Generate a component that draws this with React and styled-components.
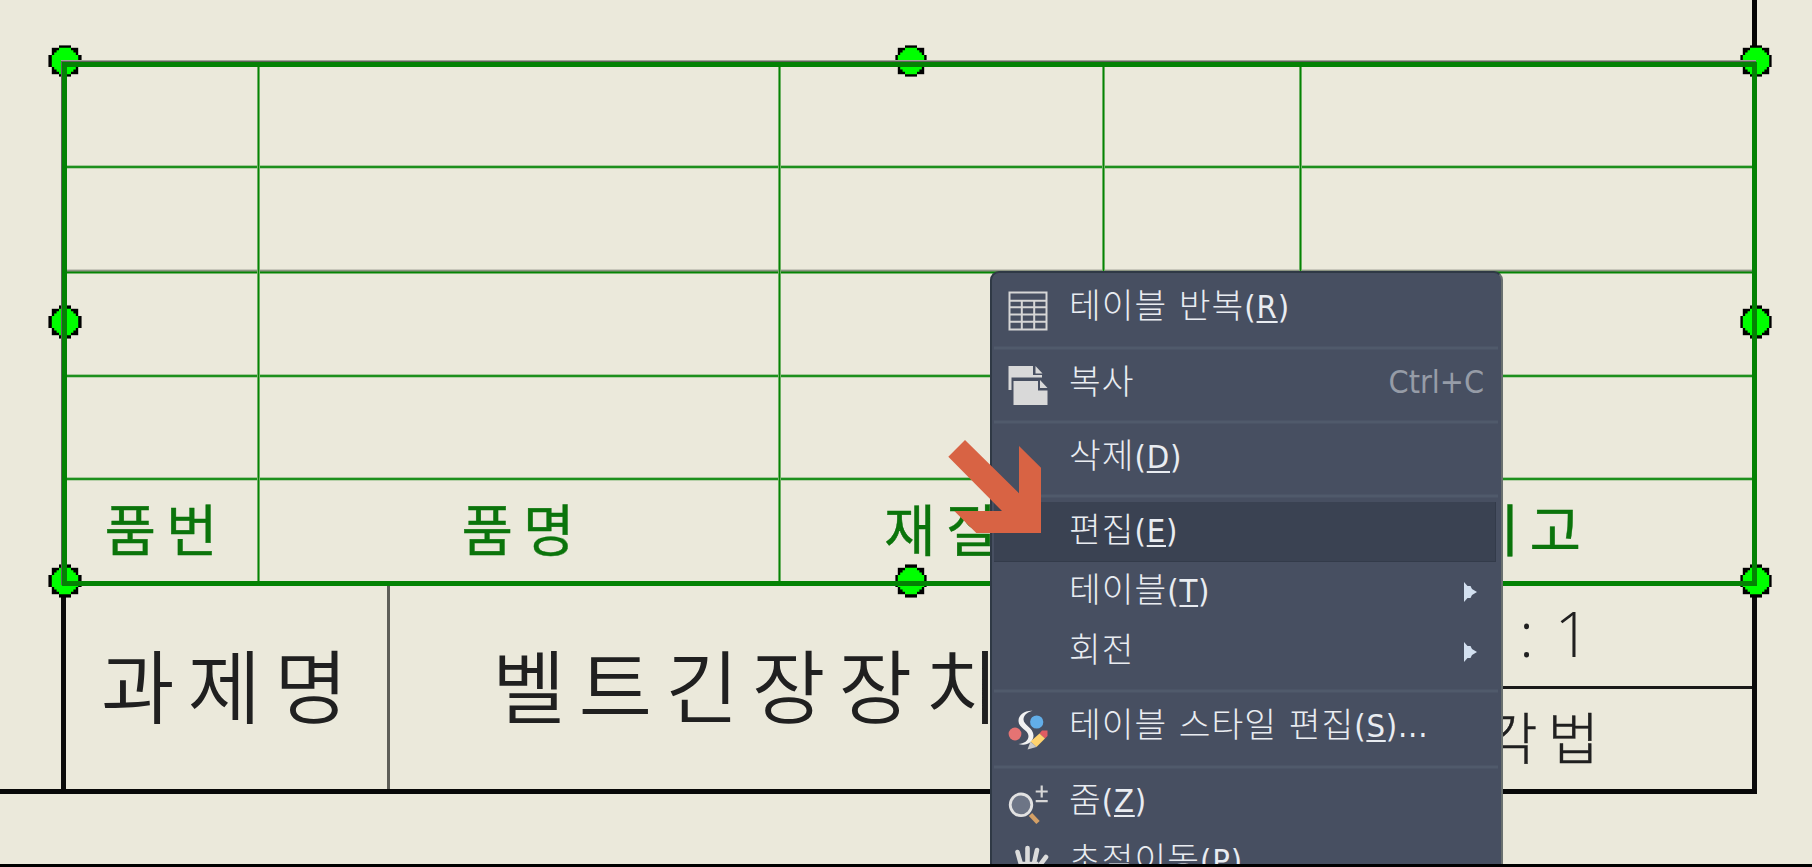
import React from 'react'
import styled, { createGlobalStyle } from 'styled-components'

const columns = [193, 521, 324, 197, 450]
const rows = [102, 105, 104, 103, 100]
const headings = ['품번', '품명', '재질', '', '비고']

const handles = [
  { x: 65.2, y: 61, tx: 1.4, ty: 1 },
  { x: 911, y: 61, tx: 1, ty: 1 },
  { x: 1756, y: 61, tx: 1, ty: 1 },
  { x: 65.2, y: 321.5, tx: 1.4, ty: 1.4 },
  { x: 1756, y: 321.5, tx: 1, ty: 1.4 },
  { x: 65.2, y: 580.5, tx: 1.4, ty: 1.4 },
  { x: 911, y: 580.5, tx: 1, ty: 1.4 },
  { x: 1756, y: 580.5, tx: 1, ty: 1.4 },
]

const menuItems = [
  { text: '테이블 반복', hotkey: 'R', icon: 'table' },
  { sep: true, top: 8, bottom: 4 },
  { text: '복사', icon: 'copy', shortcut: 'Ctrl+C' },
  { sep: true, top: 6, bottom: 4 },
  { text: '삭제', hotkey: 'D' },
  { sep: true, top: 6, bottom: 4 },
  { text: '편집', hotkey: 'E', active: true },
  { text: '테이블', hotkey: 'T', submenu: true },
  { text: '회전', submenu: true },
  { sep: true, top: 7, bottom: 4 },
  { text: '테이블 스타일 편집', hotkey: 'S', more: '...', icon: 'style' },
  { sep: true, top: 8, bottom: 3 },
  { text: '줌', hotkey: 'Z', icon: 'zoom' },
  { text: '초점이동', hotkey: 'P', icon: 'pan' },
]

const Handle = ({ x, y, tx, ty }) => (
  <Grip style={{ left: x - 17, top: y - 17 }} viewBox="-7.08 -7.08 14.16 14.16">
    <path d="M-5.5 -5.5H5.5V5.5H-5.5Z" fill="#000" />
    <rect x={-5.5 - tx} y="-2.5" width={11 + tx * 2} height="5" fill="#000" />
    <rect x="-2.5" y={-5.5 - ty} width="5" height={11 + ty * 2} fill="#000" />
    <path
      d="M-2.5 -5.5H2.5V-4.5H3.5V-3.5H4.5V-2.5H5.5V2.5H4.5V3.5H3.5V4.5H2.5V5.5H-2.5V4.5H-3.5V3.5H-4.5V2.5H-5.5V-2.5H-4.5V-3.5H-3.5V-4.5H-2.5Z"
      fill="#00ff00"
    />
  </Grip>
)

const icons = {
  table: (
    <g fill="none" stroke="#d6d6d6" strokeWidth="2">
      <path d="M1.5 1.5H38.5V38.5H1.5Z" />
      <path d="M1 9.8H39M1 16.3H39M1 23.4H39M1 30.7H39" />
      <path d="M13.8 9V39M26.2 9V39" />
    </g>
  ),
  copy: (
    <g fill="#d9d9d9" transform="translate(0 -1.5)">
      <path d="M.5 .5H25V9.5H34V12H3.5V24.5H.5Z" />
      <path d="M27.5 .5L34.5 8H27.5Z" />
      <path d="M5.5 15.5H30V25H39.5V39.5H5.5Z" />
      <path d="M32 14.5L39.5 22.5H32Z" />
    </g>
  ),
  style: (
    <g>
      <circle cx="7" cy="24" r="6.4" fill="#e57373" />
      <circle cx="28.7" cy="12" r="6.6" fill="#62aee8" />
      <path
        d="M24.5 .8C16 .5 10.5 5 10.5 11C10.5 18 20.5 20 20.5 26C20.5 31 16 33.5 10.5 34C18 36.5 25.5 32.5 25.5 25.5C25.5 18 15.5 15 15.5 9.5C15.5 5.5 18.5 2.5 24.5 .8Z"
        fill="#f2f2f2"
      />
      <path d="M34 20.5L39.5 20.5V26L37 28.5L31.5 23.5Z" fill="#e05c62" />
      <path d="M31.5 23.5L37 28.5L28.5 37L22.5 31.5Z" fill="#ffd36e" />
      <path d="M22.5 31.5L28.5 37L19.5 39.5Z" fill="#c9c9c9" />
    </g>
  ),
  zoom: (
    <g fill="none">
      <path d="M22.5 29.5L30 37.5" stroke="#d4a066" strokeWidth="4.6" />
      <circle cx="13" cy="19.8" r="10.8" fill="#6d7586" stroke="#e2e2e2" strokeWidth="2.8" />
      <path d="M33.7 .5V12.5M27.7 6.5H39.7M27.7 16.2H39.7" stroke="#d6d6d6" strokeWidth="2.2" />
    </g>
  ),
  pan: (
    <g stroke="#dcdcdc" strokeWidth="4.6" strokeLinecap="round" fill="#dcdcdc">
      <path d="M9.5 7L14 23M19.5 3V23M29 5L25 23M38 12L29 24" />
      <path d="M14 19H28V38H14Z" />
    </g>
  ),
}

const MenuItem = ({ item }) => (
  <Item $active={item.active}>
    <IconSlot>
      {item.icon && (
        <svg width="40" height="40" viewBox="0 0 40 40">
          {icons[item.icon]}
        </svg>
      )}
    </IconSlot>
    <Label>
      {item.text}
      {item.hotkey && (
        <Latin>
          (<u>{item.hotkey}</u>){item.more}
        </Latin>
      )}
    </Label>
    {item.shortcut && <Shortcut>{item.shortcut}</Shortcut>}
    {item.submenu && (
      <Caret width="13" height="20" viewBox="0 0 13 20">
        <path d="M0 0L3.5 4H6.5L8 7L13 10L8 13L6.5 16H3.5L0 20Z" fill="#d3e0f0" />
      </Caret>
    )}
  </Item>
)

const App = () => {
  return (
    <Page>
      <Global />
      <TopFrame />
      <PartsTable>
        {rows.map((h, r) =>
          columns.map((w, c) => (
            <Cell key={`${r}-${c}`} $right={c < 4} $bottom={r < 4} $shade={r === 1}>
              {r === 4 && headings[c]}
            </Cell>
          ))
        )}
      </PartsTable>
      <TitleBlock>
        <TitleCell>과제명</TitleCell>
        <ProjectCell>벨트긴장장치</ProjectCell>
        <SideCells>
          <ScaleCell>: 1</ScaleCell>
          <MethodCell>각법</MethodCell>
        </SideCells>
      </TitleBlock>
      <BottomFrame />
      {handles.map((h, i) => (
        <Handle key={i} {...h} />
      ))}
      <Menu>
        {menuItems.map((item, i) =>
          item.sep ? <Separator key={i} $top={item.top} $bottom={item.bottom} /> : <MenuItem key={i} item={item} />
        )}
      </Menu>
      <Pointer width="94" height="94" viewBox="948 440 94 94">
        <path d="M965 440L948.3 456.7L1002 511H954.3L976.3 533H1041V467.7L1019 446V493.3Z" fill="#d86344" />
      </Pointer>
      <Edge />
    </Page>
  )
}

const Global = createGlobalStyle`
  * {
    box-sizing: border-box;
  }
  body {
    margin: 0;
    background: #ebe9db;
  }
`
const Page = styled.main`
  position: relative;
  isolation: isolate;
  width: 1812px;
  height: 867px;
  overflow: hidden;
  background: #ebe9db;
  font-family: "Noto Sans CJK KR", sans-serif;
`
const TopFrame = styled.div`
  width: 1757px;
  height: 62px;
  border-right: 5px solid #050505;
`
const PartsTable = styled.section`
  position: relative;
  z-index: 2;
  display: grid;
  grid-template-columns: ${columns.map((w) => `${w}px`).join(' ')};
  grid-template-rows: ${rows.map((h) => `${h}px`).join(' ')};
  width: 1695px;
  height: 524px;
  margin-left: 62px;
  border: 5px solid #048204;
  box-shadow: -1px -1px 0 #5f625a, -1px -2px 0 #a3a399;
`
const vLine = 'linear-gradient(to right, #6cb062 1px, #048404 1px, #048404 2px, #6cb062 2px)'
const hLine = 'linear-gradient(#a5c999 1px, #1d901d 1px, #1d901d 3px, #b5d0a8 3px)'
const shadeLine = 'linear-gradient(#c8c7bb 1px, #8d9482 1px, #8d9482 2px, #4b8b45 2px, #4b8b45 3px, #048404 3px, #048404 4px, #7ab86f 4px)'
const Cell = styled.div`
  display: flex;
  align-items: center;
  justify-content: center;
  padding: 0 0 9px 5px;
  color: #0b740b;
  font-size: 56px;
  -webkit-text-stroke: 0.4px #0b740b;
  line-height: 1;
  letter-spacing: 10px;
  white-space: nowrap;
  background-image: ${(p) => (p.$right ? vLine : 'none')}, ${(p) => (p.$bottom ? (p.$shade ? shadeLine : hLine) : 'none')};
  background-size: 3px 100%, 100% ${(p) => (p.$shade ? 5 : 4)}px;
  background-position: right top, left bottom;
  background-repeat: no-repeat;
`
const TitleBlock = styled.section`
  display: flex;
  width: 1696px;
  height: 203px;
  margin-left: 61px;
  border-left: 5px solid #0b0b0b;
  border-right: 5px solid #0b0b0b;
  color: #202020;
  line-height: 1;
  white-space: nowrap;
`
const TitleCell = styled.div`
  display: flex;
  align-items: center;
  width: 324px;
  padding: 0 0 12px 35px;
  border-right: 3px solid #5e5e58;
  font-size: 80px;
  font-weight: 350;
  letter-spacing: 13px;
`
const ProjectCell = styled(TitleCell)`
  width: 912px;
  padding-left: 102px;
  border-right: none;
`
const SideCells = styled.div`
  display: flex;
  flex-direction: column;
  flex: 1;
`
const ScaleCell = styled.div`
  display: flex;
  align-items: center;
  height: 103px;
  padding: 0 0 8px 217px;
  border-bottom: 3px solid #1a1a19;
  font-family: "Open Sans", sans-serif;
  font-size: 63px;
  font-weight: 300;
  letter-spacing: 2px;
`
const MethodCell = styled.div`
  display: flex;
  align-items: center;
  height: 100px;
  padding: 0 0 8px 184px;
  font-size: 56px;
  font-weight: 300;
  -webkit-text-stroke: 0.4px #202020;
  letter-spacing: 10px;
`
const BottomFrame = styled.div`
  width: 1757px;
  height: 5px;
  background: #080808;
`
const Grip = styled.svg`
  position: absolute;
  z-index: 1;
  width: 34px;
  height: 34px;
  overflow: visible;
`
const Menu = styled.nav`
  position: absolute;
  z-index: 3;
  left: 990px;
  top: 271px;
  width: 513px;
  height: 620px;
  padding: 5px 4px 0 2px;
  border: 2px solid #2f3945;
  border-right-color: #69706f;
  border-radius: 9px 9px 0 0;
  background: #474f61;
`
const Item = styled.div`
  display: flex;
  align-items: center;
  width: 502px;
  height: 60px;
  padding: 0 12px 0 14px;
  background: ${(p) => (p.$active ? '#3a4252' : 'transparent')};
  box-shadow: ${(p) => (p.$active ? 'inset -1px -1px 0 #333b4a' : 'none')};
`
const IconSlot = styled.div`
  width: 61px;
  height: 40px;
  margin-top: 5px;
  svg {
    display: block;
    overflow: visible;
  }
`
const Label = styled.div`
  flex: 1;
  height: 60px;
  color: #e9ecf1;
  font-size: 34.5px;
  font-weight: 300;
  line-height: 50px;
  letter-spacing: 1px;
  word-spacing: 3px;
  white-space: nowrap;
`
const Latin = styled.span`
  font-family: "DejaVu Sans Condensed", "DejaVu Sans", sans-serif;
  font-stretch: condensed;
  font-weight: 400;
  font-size: 32.5px;
  letter-spacing: 0.8px;
  u {
    text-decoration-thickness: 2px;
    text-underline-offset: 3px;
  }
`
const Shortcut = styled(Latin)`
  height: 60px;
  color: #969ca7;
  font-size: 32px;
  letter-spacing: 0;
  line-height: 57px;
`
const Caret = styled.svg`
  margin-right: 7px;
`
const Separator = styled.div`
  width: 504px;
  height: 4px;
  margin: ${(p) => p.$top}px 0 ${(p) => p.$bottom}px;
  background: linear-gradient(#4b5466 1px, #505a6b 1px, #505a6b 3px, #4b5466 3px);
`
const Pointer = styled.svg`
  position: absolute;
  z-index: 4;
  left: 948px;
  top: 440px;
`
const Edge = styled.div`
  position: absolute;
  z-index: 5;
  left: 0;
  bottom: 0;
  width: 100%;
  height: 3px;
  background: #000;
`

export default App
